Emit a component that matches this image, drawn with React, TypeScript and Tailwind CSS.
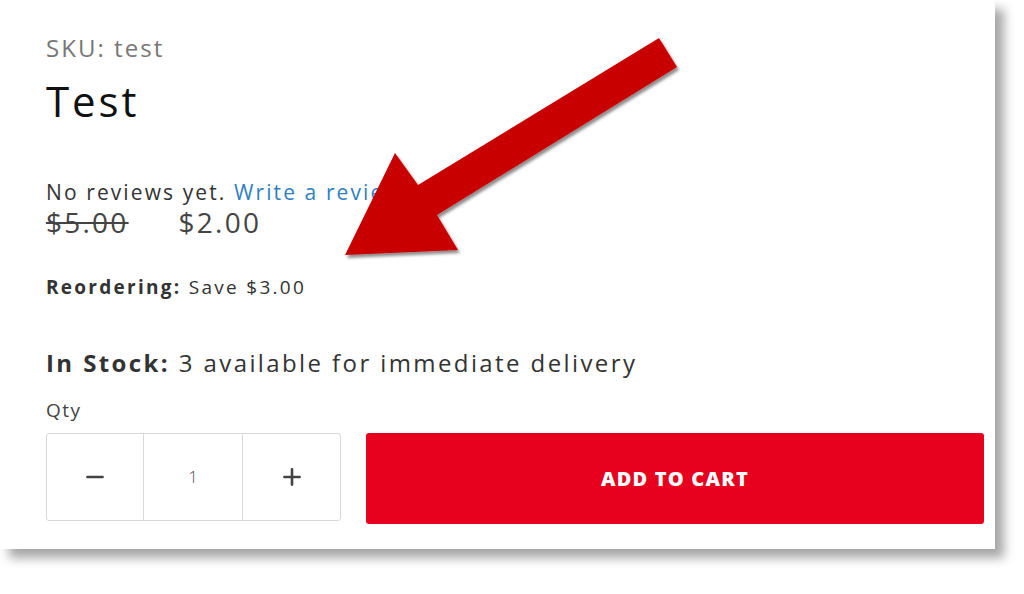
import { Minus, Plus } from "lucide-react";

const font = { fontFamily: '"Open Sans", "Liberation Sans", sans-serif' };

const Arrow = () => (
  <svg className="pointer-events-none absolute left-0 top-0" width="1024" height="594" viewBox="0 0 1024 594">
    <defs>
      <filter id="arrowShadow" x="-10%" y="-10%" width="130%" height="130%">
        <feDropShadow dx="2" dy="3" stdDeviation="1.6" floodColor="#000" floodOpacity="0.45" />
      </filter>
    </defs>
    <polygon
      points="659,38 677,67 437,215 458,250 345,255 395,153 418,185"
      fill="#c80000"
      filter="url(#arrowShadow)"
    />
  </svg>
);

export default function App() {
  return (
    <div className="relative h-[594px] w-[1024px] overflow-hidden bg-white" style={font}>
      <div className="w-[995px] bg-white pb-[25px] pl-[46px] pr-[11px] pt-[32px] shadow-[9px_9px_10px_rgba(0,0,0,0.35)]">
        <p className="text-[24px] leading-[32px] tracking-[0.085em] text-[#777]">SKU: test</p>
        <h1 className="mt-[13px] text-[42px] font-normal leading-[48px] tracking-[0.07em] text-[#111]">Test</h1>

        <p className="mt-[53px] text-[21px] leading-[28px] tracking-[0.1em] text-[#333]">
          No reviews yet. <span className="text-[#2f7fc1]">Write a review</span>
        </p>
        <div className="flex items-center gap-[50px] text-[28px] leading-[32px] tracking-[0.08em] text-[#444]">
          <span className="line-through decoration-[2px]">$5.00</span>
          <span>$2.00</span>
        </div>

        <p className="mt-[36px] text-[19px] leading-[26px] tracking-[0.12em] text-[#333]">
          <span className="font-bold">Reordering:</span> Save $3.00
        </p>

        <p className="mt-[47px] text-[24px] leading-[32px] tracking-[0.1em] text-[#333]">
          <span className="font-bold">In Stock:</span> 3 available for immediate delivery
        </p>

        <p className="mt-[18px] text-[19px] leading-[26px] tracking-[0.08em] text-[#444]">Qty</p>

        <div className="mt-[10px] flex items-start gap-[25px]">
          <div className="flex h-[88px] w-[295px] rounded-[3px] border border-[#d9d9d9]">
            <div className="flex w-[97px] items-center justify-center border-r border-[#d9d9d9] text-[#444]">
              <Minus size={26} strokeWidth={2.4} />
            </div>
            <div className="flex w-[99px] items-center justify-center border-r border-[#d9d9d9] text-[17px] font-light text-[#555]">
              1
            </div>
            <div className="flex flex-1 items-center justify-center text-[#444]">
              <Plus size={26} strokeWidth={2.4} />
            </div>
          </div>
          <button className="flex h-[91px] flex-1 items-center justify-center rounded-[3px] bg-[#e8001f] text-[20px] font-extrabold tracking-[0.06em] text-white">
            ADD TO CART
          </button>
        </div>
      </div>
      <Arrow />
    </div>
  );
}
